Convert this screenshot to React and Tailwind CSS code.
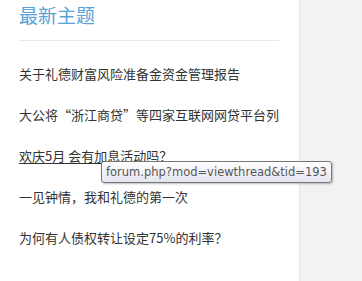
export default function App() {
  const items = [
    '关于礼德财富风险准备金资金管理报告',
    '大公将“浙江商贷”等四家互联网网贷平台列',
    '欢庆5月 会有加息活动吗？',
    '一见钟情，我和礼德的第一次',
    '为何有人债权转让设定75%的利率？',
  ];
  return (
    <div className="flex h-[281px] w-[362px] overflow-hidden bg-white font-['Noto_Sans_CJK_SC',sans-serif]">
      <div className="w-[299px] shrink-0 pl-[19px] pr-[20px]">
        <h2 className="pt-[3px] text-[19px] leading-[24px] text-[#5aa3d6]">最新主题</h2>
        <div className="mt-[13px] h-px bg-[#e8e8e8]" />
        <ul className="relative mt-[25px] flex flex-col gap-[25px] text-[13px] leading-[16px] text-[#333]">
          {items.map((t, i) => (
            <li key={i} className="relative whitespace-nowrap">
              <span className={i === 2 ? 'underline underline-offset-2' : ''}>{t}</span>
              {i === 2 && (
                <div className="absolute left-[82px] top-[13px] z-10 rounded-[3px] border border-[#767676] bg-gradient-to-b from-white to-[#e4e5f0] px-[4px] py-[3px] font-['DejaVu_Sans',sans-serif] text-[11.5px] leading-[14px] text-[#575757] shadow-[1px_1px_2px_rgba(0,0,0,0.25)]">
                  forum.php?mod=viewthread&amp;tid=193
                </div>
              )}
            </li>
          ))}
        </ul>
      </div>
      <div className="flex-1 border-l border-[#e6e6e6] bg-[#f2f2f2]" />
    </div>
  );
}
